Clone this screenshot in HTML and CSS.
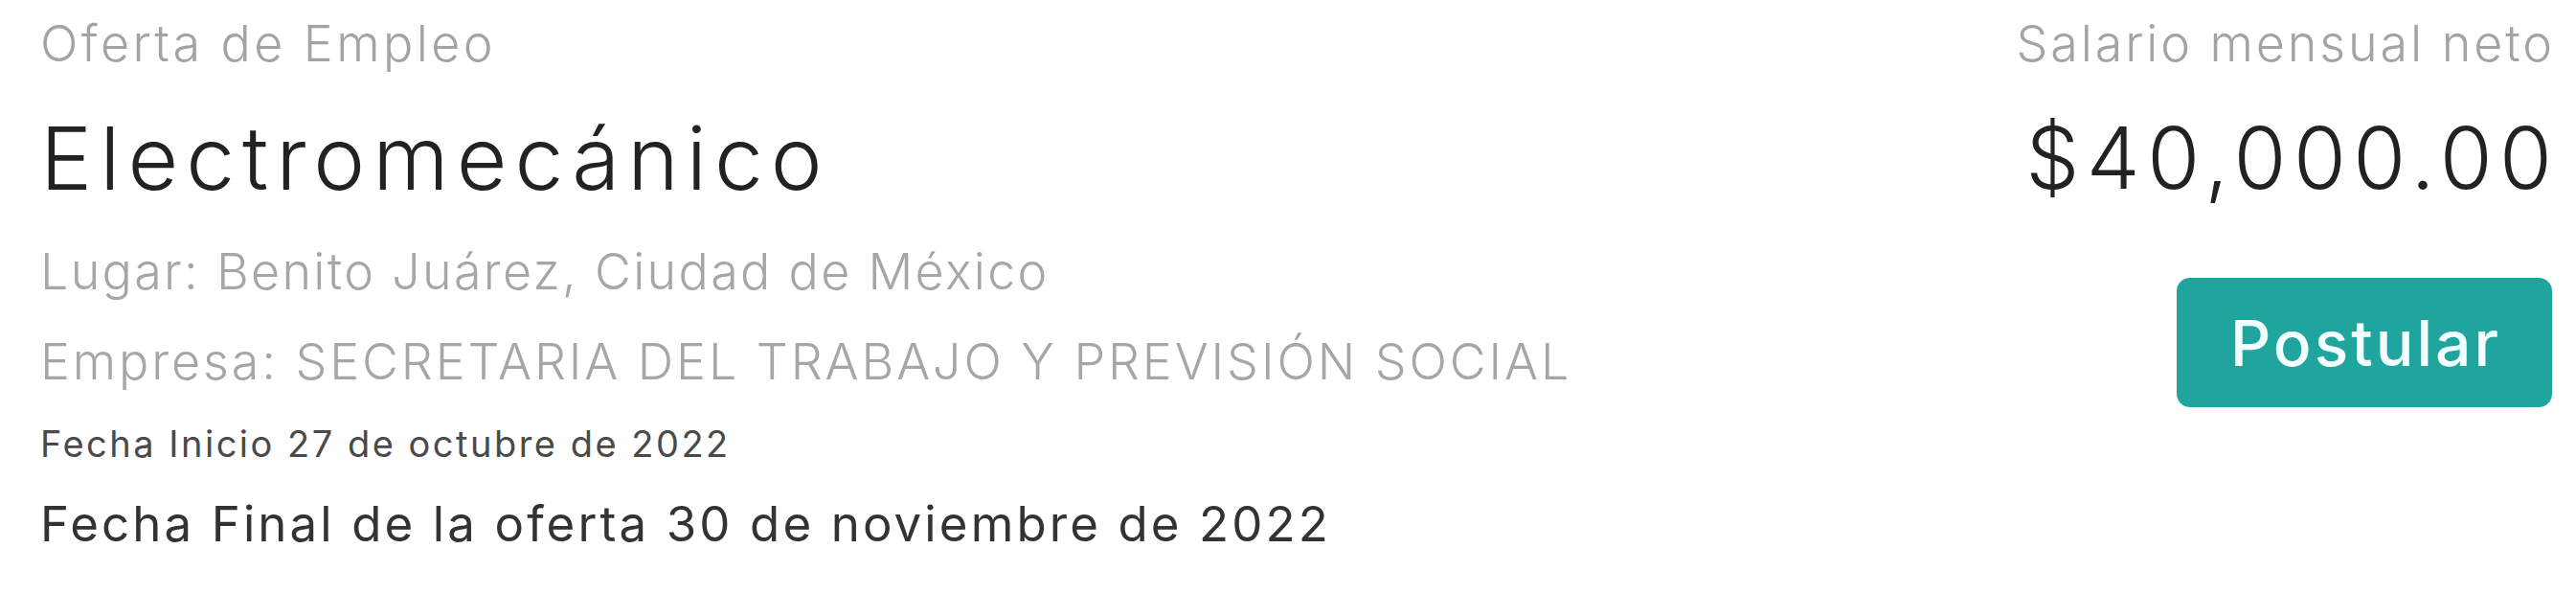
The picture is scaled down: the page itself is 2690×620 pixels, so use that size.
FILE: index.html
```html
<!DOCTYPE html>
<html lang="es">
<head>
<meta charset="utf-8">
<title>Oferta de Empleo</title>
<link rel="stylesheet" href="styles.css">
</head>
<body>
<div class="card">
  <div class="info">
    <div class="label label-left">Oferta de Empleo</div>
    <div class="title">Electromecánico</div>
    <div class="meta meta-place">Lugar: Benito Juárez, Ciudad de México</div>
    <div class="meta meta-company">Empresa: SECRETARIA DEL TRABAJO Y PREVISIÓN SOCIAL</div>
    <div class="date-start">Fecha Inicio 27 de octubre de 2022</div>
    <div class="date-end">Fecha Final de la oferta 30 de noviembre de 2022</div>
  </div>
  <div class="side">
    <div class="label label-right">Salario mensual neto</div>
    <div class="salary">$40,000.00</div>
    <button class="apply" type="button">Postular</button>
  </div>
</div>
</body>
</html>
```

FILE: styles.css
```css
html, body {
  margin: 0;
  padding: 0;
  background: #ffffff;
}

body {
  font-family: Inter, "Noto Sans", "Liberation Sans", sans-serif;
}

.card {
  display: flex;
  justify-content: space-between;
  align-items: flex-start;
  padding: 12px 25px 0 42px;
}

.info,
.side {
  display: flex;
  flex-direction: column;
  gap: 26px;
}

.side {
  align-items: flex-end;
}

.label {
  font-size: 52px;
  line-height: 68px;
  font-weight: 300;
  color: #a3a3a3;
  white-space: nowrap;
}

.label-left {
  letter-spacing: 3.4px;
}

.label-right {
  letter-spacing: 2.9px;
  margin-right: -2.9px;
}

.title {
  font-size: 91px;
  line-height: 118px;
  font-weight: 300;
  color: #222222;
  letter-spacing: 8px;
  white-space: nowrap;
}

.meta {
  font-size: 52px;
  line-height: 68px;
  font-weight: 300;
  color: #a6a6a6;
  white-space: nowrap;
}

.meta-place {
  letter-spacing: 2.3px;
}

.meta-company {
  letter-spacing: 2.9px;
}

.date-start {
  font-size: 38px;
  line-height: 50px;
  font-weight: 400;
  color: #4a4a4a;
  letter-spacing: 2.5px;
  white-space: nowrap;
}

.date-end {
  font-size: 51px;
  line-height: 66px;
  font-weight: 400;
  color: #333333;
  letter-spacing: 3.1px;
  white-space: nowrap;
}

.salary {
  font-size: 89px;
  line-height: 118px;
  font-weight: 300;
  color: #222222;
  letter-spacing: 7.4px;
  margin-right: -7.4px;
  white-space: nowrap;
}

.apply {
  margin-top: 40px;
  width: 392px;
  height: 135px;
  border: 0;
  border-radius: 14px;
  background: #20a59e;
  color: #f4ffff;
  font-family: Inter, "Noto Sans", "Liberation Sans", sans-serif;
  font-size: 66px;
  font-weight: 500;
  letter-spacing: 3px;
  text-indent: 3px;
  display: flex;
  align-items: center;
  justify-content: center;
  padding: 0;
}
```
